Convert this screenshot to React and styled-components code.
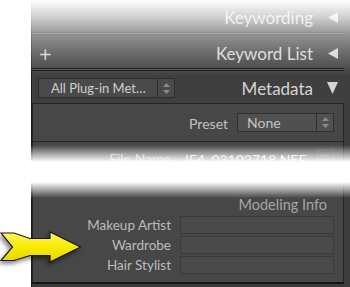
import React from 'react';
import styled, { createGlobalStyle } from 'styled-components';

const Global = createGlobalStyle`
  html, body { margin: 0; padding: 0; background: #fff; }
  body { font-family: Lato, "Open Sans", "Liberation Sans", sans-serif; }
  * { box-sizing: border-box; }
`;

const Stage = styled.div`
  position: relative;
  width: 350px;
  height: 287px;
  overflow: hidden;
  background: #fff;
`;

const Panel = styled.div`
  margin-left: 31px;
  width: 319px;
  height: 287px;
  background: #3c3c3c;
  border-left: 1px solid #1e1e1e;
  display: flex;
  flex-direction: column;
  padding-bottom: 3px;
`;

const Header = styled.div`
  height: ${p => p.$h}px;
  padding: ${p => p.$pt || 0}px 12px 0 6px;
  display: flex;
  align-items: center;
  color: #d4d4d4;
  font-size: 17px;
  background: ${p => p.$bg || '#3e3e3e'};
`;

const Title = styled.span`
  margin-left: auto;
  margin-right: ${p => p.$gap}px;
  line-height: 1;
`;

const Plus = styled.span`
  font-family: "Open Sans", sans-serif;
  font-size: 22px;
  line-height: 1;
  margin-left: 1px;
  color: #cfcfcf;
`;

const Rule = styled.div`
  margin-right: 6px;
  display: flex;
  flex-direction: column;
  & > i { display: block; height: 1px; }
  & > i:nth-child(1) { background: ${p => p.$a}; }
  & > i:nth-child(2) { background: ${p => p.$b}; }
  & > i:nth-child(3) { background: ${p => p.$a}; }
`;

const Dropdown = styled.div`
  width: 137px;
  height: 20px;
  display: flex;
  border: 1px solid #2d2d2d;
  background: #4a4a4a;
  color: #cfcfcf;
  font-size: 13px;
`;

const DropText = styled.span`
  flex: 1;
  padding-left: 12px;
  line-height: 18px;
  white-space: nowrap;
`;

const Spin = styled.span`
  width: 17px;
  border-left: 1px solid #2d2d2d;
  display: flex;
  align-items: center;
  justify-content: center;
`;

const Inner = styled.div`
  flex: 1;
  margin-right: 6px;
  background: #474747;
  border: 1px solid #252525;
  border-bottom: 2px solid #141414;
  display: flex;
  flex-direction: column;
`;

const PresetRow = styled.div`
  height: 38px;
  border-bottom: 1px solid #262626;
  display: flex;
  align-items: center;
  justify-content: flex-end;
  padding: 2px 9px 0 0;
  gap: 9px;
  font-size: 14px;
  color: #c2c2c2;
`;

const Select = styled.div`
  width: 97px;
  height: 19px;
  display: flex;
  border: 1px solid #303030;
  background: #505050;
  color: #c4c4c4;
  font-size: 14px;
  margin-top: -3px;
`;

const SelectText = styled.span`
  flex: 1;
  padding-left: 9px;
  line-height: 17px;
`;

const FieldGrid = styled.div`
  display: grid;
  grid-template-columns: 138px 1fr;
  column-gap: 9px;
  row-gap: 2px;
  padding-right: 9px;
  font-size: 13.5px;
  color: #bcbcbc;
`;

const FileGrid = styled(FieldGrid)`
  margin-top: 6px;
  grid-template-columns: 138px 1fr 17px;
  align-items: center;
  height: 22px;
  font-size: 14px;
`;

const Label = styled.span`
  text-align: right;
  line-height: 18px;
  white-space: nowrap;
`;

const Value = styled.span`
  padding-left: 3px;
  color: #e6e6e6;
  white-space: nowrap;
`;

const Field = styled.div`
  height: 18px;
  background: #4a4a4a;
  border: 1px solid #3a3a3a;
`;

const Section = styled.div`
  margin-top: auto;
  padding-bottom: 8px;
`;

const SectionTitle = styled.div`
  height: 18px;
  margin-bottom: 2px;
  text-align: right;
  padding-right: 16px;
  font-size: 14.5px;
  line-height: 18px;
  color: #a6a6a6;
`;

const IconBox = styled.div`
  width: 17px;
  height: 20px;
  border: 1px solid #5a5a5a;
  display: flex;
  flex-direction: column;
  justify-content: center;
  gap: 3px;
  padding: 0 3px;
  & > i { display: block; height: 1px; background: #7a7a7a; }
`;

const Fade = styled.div`
  position: absolute;
  left: 0;
  right: 0;
  top: ${p => p.$top}px;
  height: ${p => p.$h}px;
  background: ${p => p.$bg};
  pointer-events: none;
`;

const ArrowSvg = styled.svg`
  position: absolute;
  left: 0;
  top: 229px;
  filter: drop-shadow(-2px 3px 2px rgba(0, 0, 0, 0.45));
`;

const TriLeft = () => (
  <svg width="10" height="11" viewBox="0 0 10 11"><polygon points="10,0 10,11 0,5.5" fill="currentColor" /></svg>
);
const TriDown = () => (
  <svg width="11" height="12" viewBox="0 0 11 12"><polygon points="0,0 11,0 5.5,12" fill="currentColor" /></svg>
);
const Spinner = () => (
  <svg width="7" height="11" viewBox="0 0 7 11"><polygon points="3.5,0 7,4 0,4" fill="#8a8a8a" /><polygon points="0,7 7,7 3.5,11" fill="#8a8a8a" /></svg>
);

export default function App() {
  const modeling = ['Makeup Artist', 'Wardrobe', 'Hair Stylist'];
  return (
    <Stage>
      <Global />
      <Panel>
        <Header $h={32} $pt={2}>
          <Title $gap={15}>Keywording</Title>
          <TriLeft />
        </Header>
        <Rule $a="#2a2a2a" $b="#606060"><i /><i /><i /></Rule>
        <Header $h={33} $pt={3}>
          <Plus>+</Plus>
          <Title $gap={15}>Keyword List</Title>
          <TriLeft />
        </Header>
        <Rule $a="#111" $b="#4c4c4c"><i /><i /><i /></Rule>
        <Header $h={32} $pt={2} $bg="#3f3f3f">
          <Dropdown>
            <DropText>All Plug-in Met…</DropText>
            <Spin><Spinner /></Spin>
          </Dropdown>
          <Title $gap={14}>Metadata</Title>
          <TriDown />
        </Header>
        <Inner>
          <PresetRow>
            <span>Preset</span>
            <Select>
              <SelectText>None</SelectText>
              <Spin><Spinner /></Spin>
            </Select>
          </PresetRow>
          <FileGrid>
            <Label>File Name</Label>
            <Value>JF4_03102718.NEF</Value>
            <IconBox><i /><i /><i /></IconBox>
          </FileGrid>
          <Section>
            <SectionTitle>Modeling Info</SectionTitle>
            <FieldGrid>
              {modeling.map(m => (
                <React.Fragment key={m}>
                  <Label>{m}</Label>
                  <Field />
                </React.Fragment>
              ))}
            </FieldGrid>
          </Section>
        </Inner>
      </Panel>
      <Fade $top={0} $h={76} $bg="linear-gradient(to bottom, rgba(255,255,255,1) 0px, rgba(255,255,255,0.76) 17px, rgba(255,255,255,0.42) 36px, rgba(255,255,255,0.24) 53px, rgba(255,255,255,0) 76px)" />
      <Fade $top={145} $h={53} $bg="linear-gradient(to bottom, rgba(255,255,255,0) 0px, rgba(255,255,255,1) 17px, rgba(255,255,255,1) 37px, rgba(255,255,255,0) 53px)" />
      <ArrowSvg width="84" height="36" viewBox="0 0 84 36">
        <defs>
          <linearGradient id="ay" x1="0" y1="0" x2="0" y2="1">
            <stop offset="0" stopColor="#fff56a" />
            <stop offset="0.5" stopColor="#f7ea00" />
            <stop offset="1" stopColor="#e6d600" />
          </linearGradient>
        </defs>
        <polygon
          points="1,4 14,4 30,9.5 50,9.5 50,3 80.5,18 50,33 50,26.5 30,26.5 14,31.5 1,31.5 12.5,18"
          fill="url(#ay)"
          stroke="#1a1a1a"
          strokeWidth="1.2"
          strokeLinejoin="miter"
        />
      </ArrowSvg>
    </Stage>
  );
}
